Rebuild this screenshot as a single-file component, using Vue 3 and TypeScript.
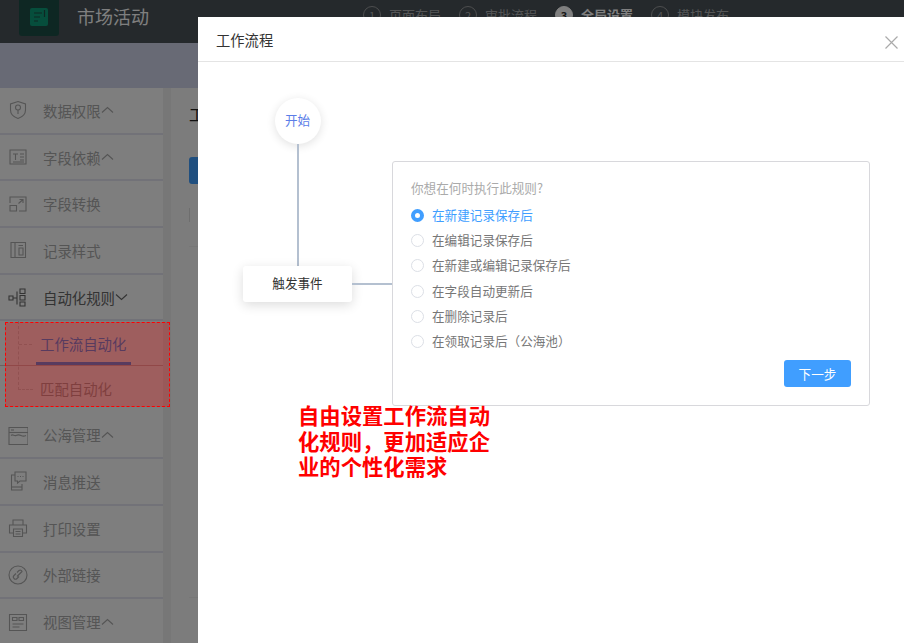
<script setup lang="ts">
import { ref } from "vue";

interface MenuItem {
  name: string;
  arrow?: "up" | "down";
  active?: boolean;
  icon: string[];
}

const circle = (cx: number, cy: number, r: number) =>
  `M${cx - r} ${cy}a${r} ${r} 0 1 0 ${r * 2} 0a${r} ${r} 0 1 0 ${-r * 2} 0z`;

const topMenu: MenuItem[] = [
  {
    name: "数据权限",
    arrow: "up",
    icon: ["M10 1.5L17.5 4v6c0 4-3 7-7.5 8.5C5.500 17 2.500 14 2.500 10V4z", circle(10, 7.500, 2.500), "M10 10v4"],
  },
  {
    name: "字段依赖",
    arrow: "up",
    icon: ["M2 3h16v14H2z", "M5 7h5M7.500 7v6", "M12 7h4M12 10h4M12 13h4M5 15h11"],
  },
  {
    name: "字段转换",
    icon: ["M2 9V3h16v14h-7", "M2 11.500h6.500V17H2z", "M10.500 9.500L15 5.500M11.500 5.500H15V9"],
  },
  {
    name: "记录样式",
    icon: ["M3 2.500h14.500v15H3z", "M7 2.500v15", "M10.500 5.500H15M11 8h4v7h-4z"],
  },
  {
    name: "自动化规则",
    arrow: "down",
    active: true,
    icon: ["M1 9h4v4H1z", "M5 11h4M9 4.500v13", "M12 2h5v4.500h-5zM12 8.500h5V13h-5zM12 15h5v4h-5z"],
  },
];

const bottomMenu: MenuItem[] = [
  {
    name: "公海管理",
    arrow: "up",
    icon: ["M1 2.500h19v17H1z", "M1 7.500h19", "M3 10.500c2-2 3 1 5 0s3-1 5 0 3 1 5 0", "M3 5h3"],
  },
  {
    name: "消息推送",
    icon: ["M7 4H3.500v15H14v-6", "M7 1h11v9h-6l-2.500 2v-2H7z", "M9.500 5.500h1M12 5.500h1M14.500 5.500h1", "M3.500 16H14"],
  },
  {
    name: "打印设置",
    icon: ["M5 7V2h10v5", "M5 15H1.500V7h17v8H15", "M5.500 11h9v7.500h-9z", "M7.500 13.500h5M7.500 16h5"],
  },
  {
    name: "外部链接",
    icon: [circle(10, 10, 9), "M8 8.500L6 10.500a2 2 0 0 0 3 3L11 11.500", "M9 11.500L14 6.500a2 2 0 0 0-3-1L9 7.500"],
  },
  {
    name: "视图管理",
    arrow: "up",
    icon: ["M1.500 2.500h17v16h-17z", "M4.500 5.500h4.500v3H4.500zM11 5.500h4.500v3H11z", "M4.500 12h11M4.500 15h7"],
  },
];

const steps = [
  { no: "1", name: "页面布局" },
  { no: "2", name: "审批流程" },
  { no: "3", name: "全局设置", current: true },
  { no: "4", name: "模块发布" },
];

const triggers = [
  "在新建记录保存后",
  "在编辑记录保存后",
  "在新建或编辑记录保存后",
  "在字段自动更新后",
  "在删除记录后",
  "在领取记录后（公海池）",
];

const selected = ref(0);
</script>

<template>
  <div class="page">
    <header class="topbar">
      <div class="logo">
        <svg width="18" height="18" viewBox="0 0 18 18">
          <rect width="18" height="18" rx="2" fill="#0c9c79" />
          <path d="M4 5h8M4 9h6M4 13h4M14.500 2v7" stroke="#1d4f47" stroke-width="1.200" fill="none" />
        </svg>
      </div>
      <div class="app-name">市场活动</div>
      <ol class="steps">
        <li v-for="step in steps" :key="step.no" class="step" :class="{ current: step.current }">
          <span class="step-no">{{ step.no }}</span>
          <span>{{ step.name }}</span>
        </li>
      </ol>
    </header>
    <div class="band"></div>
    <div class="workspace">
      <aside class="sidebar">
        <div v-for="item in topMenu" :key="item.name" class="menu-item" :class="{ active: item.active }">
          <svg class="menu-icon" width="20" height="20" viewBox="0 0 20 20">
            <path v-for="d in item.icon" :key="d" :d="d" />
          </svg>
          <span>{{ item.name }}</span>
          <svg v-if="item.arrow" class="arrow" :class="item.arrow" width="13" height="8" viewBox="0 0 13 8">
            <path d="M1 1.500l5.500 5 5.500-5" />
          </svg>
        </div>
        <div class="sub-menu">
          <div class="sub-item selected"><span>工作流自动化</span></div>
          <div class="sub-item"><span>匹配自动化</span></div>
          <div class="highlight"></div>
        </div>
        <div v-for="item in bottomMenu" :key="item.name" class="menu-item">
          <svg class="menu-icon" width="20" height="20" viewBox="0 0 20 20">
            <path v-for="d in item.icon" :key="d" :d="d" />
          </svg>
          <span>{{ item.name }}</span>
          <svg v-if="item.arrow" class="arrow" :class="item.arrow" width="13" height="8" viewBox="0 0 13 8">
            <path d="M1 1.500l5.500 5 5.500-5" />
          </svg>
        </div>
      </aside>
      <main class="content">
        <div class="content-title">工作流程</div>
        <div class="content-button"></div>
        <div class="content-head"><div class="head-tick"></div></div>
        <div class="content-foot"></div>
      </main>
    </div>

    <div class="mask"></div>

    <section class="dialog">
      <div class="dialog-header">
        <span>工作流程</span>
        <svg class="close" width="13" height="13" viewBox="0 0 13 13">
          <path d="M.5.500l12 12M12.500.500l-12 12" />
        </svg>
      </div>
      <div class="flow">
        <div class="flow-column">
          <div class="start-node">开始</div>
          <div class="flow-line"></div>
          <div class="trigger-node">触发事件</div>
        </div>
        <div class="connector"></div>
        <div class="rule-panel">
          <div class="rule-title">你想在何时执行此规则?</div>
          <div
            v-for="(label, index) in triggers"
            :key="label"
            class="radio-row"
            :class="{ checked: selected === index }"
          >
            <span class="radio"></span>
            <span class="radio-label">{{ label }}</span>
          </div>
          <div class="panel-footer">
            <button class="next-button">下一步</button>
          </div>
        </div>
      </div>
      <p class="callout">自由设置工作流自动化规则，更加适应企业的个性化需求</p>
    </section>
  </div>
</template>

<style>
html,
body {
  margin: 0;
  background: #fff;
}
</style>

<style scoped>
.page {
  position: relative;
  display: flex;
  flex-direction: column;
  width: 904px;
  height: 643px;
  overflow: hidden;
  background: #fafafa;
  font-family: "Noto Sans CJK SC", "Noto Sans", sans-serif;
}

.topbar {
  display: flex;
  flex: none;
  height: 43px;
  background: #4a5258;
  color: #fff;
}

.logo {
  display: flex;
  flex: none;
  align-items: center;
  justify-content: center;
  box-sizing: border-box;
  width: 40px;
  height: 36px;
  margin-left: 19px;
  padding-bottom: 2px;
  border-radius: 0 0 3px 3px;
  background: #1d4f47;
}

.app-name {
  margin: 3px 0 0 18px;
  font-size: 18px;
  line-height: 26px;
  color: #fff;
}

.steps {
  display: flex;
  gap: 18px;
  margin: 4px 0 0 214px;
  padding: 0;
  list-style: none;
}

.step {
  display: flex;
  gap: 8px;
  align-items: flex-start;
  font-size: 13px;
  line-height: 22px;
  color: #a8aaac;
}

.step.current {
  font-weight: 700;
  color: #fff;
}

.step-no {
  box-sizing: border-box;
  width: 18px;
  height: 18px;
  margin-top: 2px;
  border: 1px solid #9a9c9e;
  border-radius: 50%;
  font-size: 11px;
  line-height: 16px;
  text-align: center;
}

.current .step-no {
  border-color: #fff;
  background: #fff;
  color: #333;
}

.band {
  flex: none;
  height: 45px;
  background: #d0d4ea;
}

.workspace {
  display: flex;
  flex: 1;
  min-height: 0;
  background: #efefef;
}

.sidebar {
  flex: none;
  width: 163px;
  background: #fcfcfc;
}

.menu-item {
  display: flex;
  align-items: center;
  box-sizing: border-box;
  height: 46.700px;
  padding-left: 8px;
  border-bottom: 2px solid #e5e5f0;
  font-size: 14.400px;
  color: #aaa;
}

.menu-item.active {
  color: #666;
}

.menu-icon {
  flex: none;
  margin-right: 15px;
  fill: none;
  stroke: currentColor;
  stroke-width: 1.100;
}

.arrow {
  fill: none;
  stroke: currentColor;
  stroke-width: 1.100;
}

.arrow.up {
  transform: rotate(180deg);
}

.sub-menu {
  position: relative;
  height: 91px;
  background: #fcfcfc;
}

.sub-menu::before {
  position: absolute;
  top: 0;
  left: 18px;
  width: 14px;
  height: 68px;
  border-bottom: 1px dashed #d8d8d8;
  border-left: 1px dashed #d8d8d8;
  content: "";
}

.sub-menu::after {
  position: absolute;
  top: 23px;
  left: 19px;
  width: 13px;
  border-top: 1px dashed #d8d8d8;
  content: "";
}

.sub-item {
  position: relative;
  box-sizing: border-box;
  height: 45px;
  padding: 11px 0 0 40px;
  font-size: 14.400px;
  line-height: 24px;
  color: #aaa;
}

.sub-item.selected {
  border-bottom: 1px solid #d8c0c0;
  color: #409eff;
}

.sub-item.selected span {
  display: block;
  width: 95px;
  height: 33px;
  margin-left: -4px;
  padding-left: 4px;
  box-sizing: border-box;
  border-bottom: 3px solid #409eff;
}

.highlight {
  position: absolute;
  z-index: 30;
  top: 1px;
  left: 5px;
  box-sizing: border-box;
  width: 165px;
  height: 85px;
  border: 1px dashed #f00;
  background: rgba(255, 0, 0, 0.25);
}

.content {
  flex: 1;
  margin-left: 8px;
  padding: 14px 18px;
  background: #f8f8f8;
}

.content-title {
  font-size: 16px;
  line-height: 24px;
  color: #222;
}

.content-button {
  width: 60px;
  height: 27px;
  margin-top: 31px;
  border-radius: 3px;
  background: #409eff;
}

.content-head {
  height: 38px;
  margin-top: 24px;
  border-bottom: 1px solid #eee;
}

.head-tick {
  width: 1px;
  height: 14px;
  background: #ddd;
}

.content-foot {
  height: 350px;
  border-bottom: 1px solid #eee;
}

.mask {
  position: absolute;
  z-index: 20;
  inset: 0;
  background: rgba(0, 0, 0, 0.5);
}

.dialog {
  position: absolute;
  z-index: 21;
  top: 17px;
  right: 0;
  bottom: 0;
  left: 198px;
  background: #fff;
}

.dialog-header {
  display: flex;
  align-items: center;
  justify-content: space-between;
  box-sizing: border-box;
  height: 45px;
  padding: 1px 6px 0 18px;
  border-bottom: 1px solid #e4e4e4;
  font-size: 14.300px;
  color: #333;
}

.close {
  margin-top: 6px;
  fill: none;
  stroke: #aaa;
  stroke-width: 1.200;
}

.flow {
  display: flex;
  align-items: flex-start;
  padding-left: 45px;
}

.flow-column {
  display: flex;
  flex: none;
  flex-direction: column;
  align-items: center;
  width: 109px;
  margin-top: 36px;
}

.start-node {
  width: 46px;
  height: 46px;
  border-radius: 50%;
  background: #fff;
  box-shadow: 0 2px 10px rgba(0, 0, 0, 0.12);
  font-size: 12.600px;
  line-height: 44px;
  text-align: center;
  color: #5b7de8;
}

.flow-line {
  width: 2px;
  height: 122px;
  background: #b4c0d0;
}

.trigger-node {
  width: 109px;
  height: 36px;
  border-radius: 3px;
  background: #fff;
  box-shadow: 0 3px 12px rgba(0, 0, 0, 0.14);
  font-size: 12.600px;
  line-height: 34px;
  text-align: center;
  color: #333;
}

.connector {
  flex: none;
  width: 40px;
  height: 2px;
  margin-top: 221px;
  background: #b4c0d0;
}

.rule-panel {
  flex: none;
  box-sizing: border-box;
  width: 478px;
  height: 245px;
  margin-top: 99px;
  padding: 15px 18px 0;
  border: 1px solid #d8d8dc;
  border-radius: 3px;
}

.rule-title {
  height: 26px;
  font-size: 12.600px;
  line-height: 22px;
  color: #aaa;
}

.radio-row {
  display: flex;
  gap: 8px;
  align-items: center;
  height: 25.200px;
  font-size: 12.600px;
  color: #777;
}

.radio-label {
  margin-top: -2px;
}

.radio {
  box-sizing: border-box;
  width: 13px;
  height: 13px;
  border: 1px solid #dcdfe6;
  border-radius: 50%;
}

.checked {
  color: #409eff;
}

.checked .radio {
  border: 4px solid #409eff;
  background: #fff;
}

.panel-footer {
  display: flex;
  justify-content: flex-end;
  margin-top: 6px;
}

.next-button {
  width: 67px;
  height: 27px;
  padding: 0;
  border: 0;
  border-radius: 3px;
  background: #409eff;
  font-family: inherit;
  font-size: 12.600px;
  color: #fff;
}

.callout {
  width: 195px;
  margin: -4px 0 0 100px;
  font-size: 21.330px;
  font-weight: 700;
  line-height: 25.500px;
  color: #f00;
}
</style>
